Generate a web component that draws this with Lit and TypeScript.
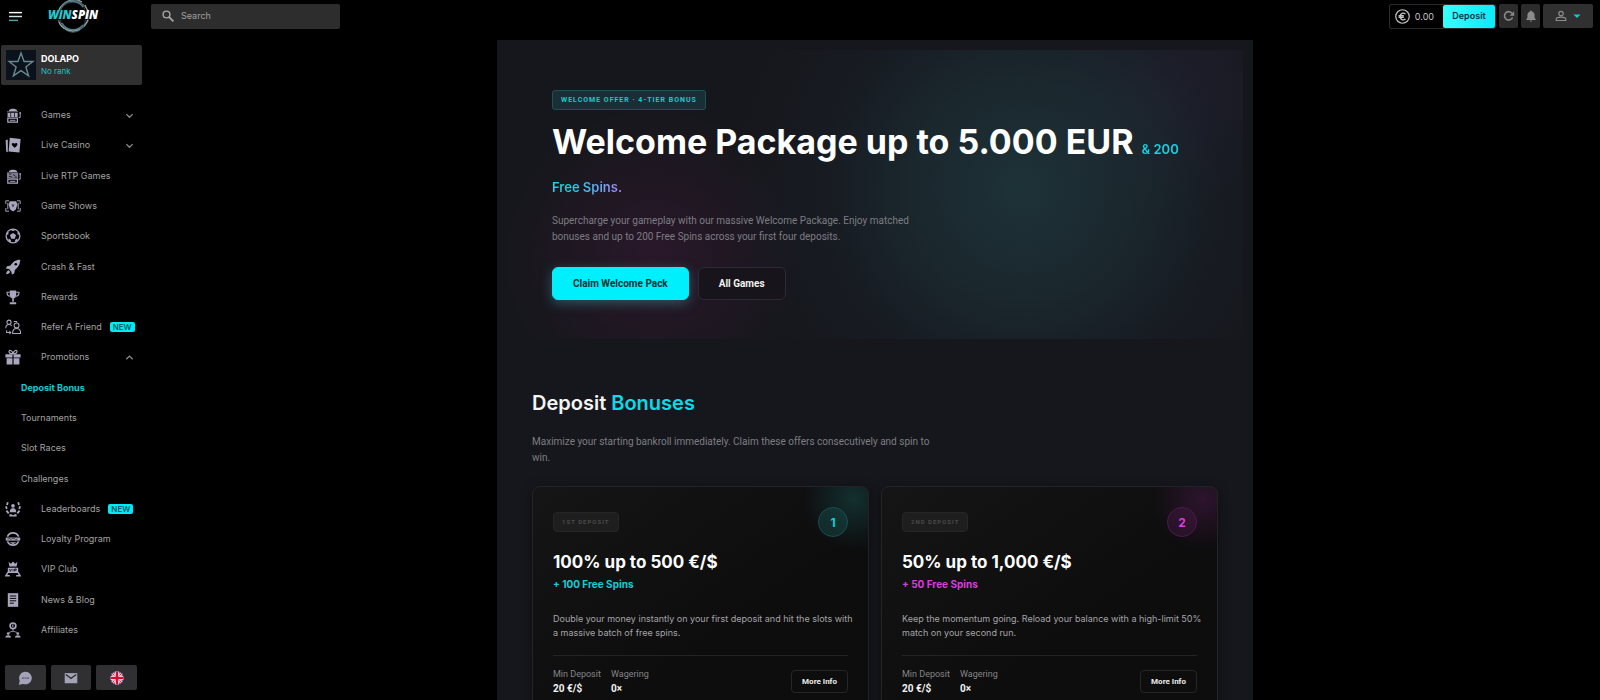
import { LitElement, html, svg, css, nothing, TemplateResult } from "lit";
import { customElement, property } from "lit/decorators.js";
import { classMap } from "lit/directives/class-map.js";

const shapes: Record<string, TemplateResult> = {
  slots: svg`<path d="M5 4C6 1.500 14 1.500 15 4v1H5z" fill="currentColor"/><path d="M2.500 5.500h14v1.200h-14zM3.200 7.500h3.600v5H3.200zM7.700 7.500h3.600v5H7.700zM12.200 7.500h3.600v5h-3.600z" fill="currentColor"/><path d="M3.500 14h12v5h-12z" fill="none" stroke="currentColor" stroke-width="1.500"/><path d="M6 16h7v1.200H6z" fill="currentColor"/><path d="M17 13h2V8" fill="none" stroke="currentColor" stroke-width="1.200"/><circle cx="19" cy="7.500" r="1.200" fill="currentColor"/>`,
  cards: svg`<path d="M3.500 3 .8 4.200 1.500 18l2 1z" fill="currentColor"/><path d="M6 1 19.500 2.500 18 19.500 4.500 18z" fill="currentColor"/><path d="M12 13.500C9.500 11.500 8 10 8.500 8.500 9 7 11 7 12 8.500 13.300 7 15.300 7.500 15.500 9c.1 1.500-1.500 3-3.500 4.500z" fill="#000"/>`,
  rtp: svg`<path d="M5 4C6 1.500 14 1.500 15 4v1H5z" fill="currentColor"/><path d="M2.500 5.500h14v7.500h-14z" fill="currentColor" opacity=".75"/><path d="M5 7.500h3M10 8l3 2M5 10.500l4 .8M12 11.500h3" stroke="#000" stroke-width=".9"/><path d="M3.500 14h12v5h-12z" fill="none" stroke="currentColor" stroke-width="1.500"/><path d="M6 16h7v1.200H6z" fill="currentColor"/><path d="M17 14h2V8" fill="none" stroke="currentColor" stroke-width="1.200"/><circle cx="19" cy="7.500" r="1.200" fill="currentColor"/>`,
  shows: svg`<path d="M5 3.500H1v4M1 12.500v4h4M15 3.500h4v4M19 12.500v4h-4M3.500 6v8M16.500 6v8" fill="none" stroke="currentColor" stroke-width="1.200"/><path d="M6 4h8l1.500 4-2 6.500L10 17l-3.500-2.500L4.500 8z" fill="currentColor"/><path d="m8 8 2 4 2-4z" fill="#000" opacity=".65"/>`,
  ball: svg`<circle cx="10" cy="10" r="8.600" fill="none" stroke="currentColor" stroke-width="1.600"/><path d="m10 6.200 3.800 2.700-1.500 4.400H7.700L6.200 8.900zM6.500 1.800h7L10 4zM1.500 8l2.500.5.500-3.500L3 5zM18.500 8l-2.500.5-.5-3.500L17 5zM4 16l.7-3 2.800 2-.5 3zM16 16l-.7-3-2.800 2 .5 3z" fill="currentColor"/>`,
  rocket: svg`<path d="M19 1C13 1 9.500 4 7 8L2.500 9 1 12l4 .5L8 16l.5 3.500 3-1.500 1-4.500C16 11 19 7 19 1z" fill="currentColor"/><circle cx="13.500" cy="6.500" r="1.600" fill="#000"/><path d="M4.500 14c-2 .5-3 2.500-3 5 2.500 0 4.500-1 5-3z" fill="currentColor"/>`,
  cup: svg`<path d="M6 2h8v5c0 3-1.500 5-4 5S6 10 6 7zM9 11h2v5H9zM6 16.500h8V19H6z" fill="currentColor"/><path d="M6 4H2.500c0 3 1.500 5 4 5M14 4h3.500c0 3-1.500 5-4 5" fill="none" stroke="currentColor" stroke-width="1.400"/>`,
  refer: svg`<g fill="none" stroke="currentColor" stroke-width="1.300"><circle cx="5" cy="4" r="2.600"/><path d="M1 11.500c0-3 1.500-4.500 4-4.500 1.500 0 3 .6 3.500 2"/><circle cx="14.500" cy="8" r="3"/><path d="M9.500 18c0-4 1.500-6 5-6s5 2 5 6z"/><path d="M2 14v3h5M5.500 15.200 7.200 17l-1.700 1.800M11 3h3.500v1.500"/></g>`,
  gift: svg`<path d="M.5 6.500h8.800v4H.5zM10.700 6.500h8.800v4h-8.800zM2 11.500h7.300v8H2zM10.700 11.500H18v8h-7.300z" fill="currentColor"/><path d="M10 6C7 6 5 5 5 3.200 5 .8 9 1 10 6zM10 6c3 0 5-1 5-2.800C15 .8 11 1 10 6z" fill="none" stroke="currentColor" stroke-width="1.500"/>`,
  leaders: svg`<circle cx="10" cy="6" r="2.300" fill="currentColor"/><path d="M6 14c0-3.500 1.200-5 4-5s4 1.500 4 5z" fill="currentColor"/><path d="M3.500 1.500 2.500 5M1.200 6.500 2.200 10M1.800 12l2.800 3.500M16.500 1.500l1 3.500M18.800 6.500l-1 3.500M18.200 12l-2.800 3.500" stroke="currentColor" stroke-width="2.200"/><path d="M5.500 16.500h3v3h-3zM11.500 16.500h3v3h-3zM8.500 17.500h3v2h-3z" fill="currentColor"/>`,
  loyalty: svg`<path d="M3 7C6 .8 14 .8 17 7M3 13c3 6.200 11 6.200 14 0" fill="none" stroke="currentColor" stroke-width="2"/><path d="M1 8.200h18v3.800H1z" fill="currentColor"/><path d="M3 10h2l1-1 1.500 2L9 9.500h3l1.500 1.500L16 9.800" stroke="#000" fill="none" stroke-width=".7"/><path d="M6 14h8l-4 2.500z" fill="currentColor"/>`,
  vip: svg`<path d="m4.500 1 2.800 2.500L10 .5l2.700 3L15.500 1l-1 6h-9zM3.500 8.500h13V15h-13z" fill="currentColor"/><path d="m5.500 10 1.300 3 1.300-3M10 10v3M12 13v-3h2v1.500h-2" stroke="#000" stroke-width=".9" fill="none"/><path d="M4 14 1 18.500h5M16 14l3 4.500h-5" stroke="currentColor" fill="none" stroke-width="1.800"/>`,
  news: svg`<path d="M3.500 1.500h13v17h-13z" fill="currentColor"/><path d="M6 5h8M6 8h8M6 11h8M6 14h5" stroke="#000" stroke-width="1.200"/>`,
  affiliates: svg`<circle cx="10" cy="4.800" r="3.600" fill="none" stroke="currentColor" stroke-width="2"/><path d="M11 3.500H9.500v2.600H11" fill="none" stroke="currentColor"/><path d="M10 9v3M5 13l5-1.500 5 1.500" stroke="currentColor" fill="none"/><circle cx="4" cy="14.500" r="1.700" fill="currentColor"/><circle cx="16" cy="14.500" r="1.700" fill="currentColor"/><path d="M.5 19.500c0-2 1.300-3 3.500-3s3.500 1 3.500 3zM12.500 19.500c0-2 1.300-3 3.500-3s3.500 1 3.500 3z" fill="currentColor"/>`,
  down: svg`<path d="m3 7 7 7 7-7" fill="none" stroke="currentColor" stroke-width="2.800"/>`,
  up: svg`<path d="m3 14 7-7 7 7" fill="none" stroke="currentColor" stroke-width="2.800"/>`,
  search: svg`<circle cx="7.500" cy="7.500" r="5.700" fill="none" stroke="currentColor" stroke-width="2.300"/><path d="m11.500 11.500 7.500 7.500" stroke="currentColor" stroke-width="2.800"/>`,
  star: svg`<path d="m10 1.500 2.200 6h6.300l-5 3.900 1.900 6.300-5.400-3.700-5.400 3.700 1.900-6.300-5-3.900h6.300z" fill="none" stroke="#68898f" stroke-width="1"/>`,
  euro: svg`<circle cx="10" cy="10" r="9" fill="none" stroke="currentColor" stroke-width="1.600"/><path d="M14 6.700C10.500 4 7 6.200 7 10s3.500 6 7 3.300M4.800 9h7M4.800 11.200h7" fill="none" stroke="currentColor" stroke-width="1.700"/>`,
  refresh: svg`<path d="M16 12.500A7 7 0 1 1 15.500 6" fill="none" stroke="currentColor" stroke-width="2.600"/><path d="M18.500 2v7.500H11z" fill="currentColor"/>`,
  bell: svg`<path d="M10 1c1 0 1.500.6 1.500 1.600C14.500 3.500 16 5.800 16 9v4.500l2 2v1H2v-1l2-2V9c0-3.200 1.500-5.500 4.500-6.400C8.500 1.600 9 1 10 1zM8 17.500h4c0 1.200-.8 2-2 2s-2-.8-2-2z" fill="currentColor"/>`,
  person: svg`<circle cx="10" cy="6" r="3.700" fill="none" stroke="currentColor" stroke-width="2"/><path d="M2 17.500v-2c0-2.200 3-3.500 8-3.500s8 1.300 8 3.500v2z" fill="none" stroke="currentColor" stroke-width="2"/>`,
  caret: svg`<path d="M1 6h18l-9 9z" fill="currentColor"/>`,
  chat: svg`<path d="M10.500 1a9 9 0 1 1-3 17.400L1 19.500l1.500-5.500A9 9 0 0 1 10.500 1z" fill="currentColor"/><path d="M5.500 9h2.800v2.300H5.500zM9.300 9h2.800v2.300H9.300zM13 9h2.800v2.300H13z" fill="#6a6a7e"/>`,
  mail: svg`<path d="M1 3h18v14.500H1z" fill="currentColor"/><path d="m2.500 5 7.500 5.500L17.500 5" fill="none" stroke="#303032" stroke-width="1.900"/>`,
  flag: svg`<clipPath id="disc"><circle cx="10" cy="10" r="9.500"/></clipPath><g clip-path="url(#disc)"><path d="M0 0h20v20H0z" fill="#2a3580"/><path d="m0 0 20 20M20 0 0 20" stroke="#fff" stroke-width="4"/><path d="m0 0 20 20M20 0 0 20" stroke="#d21034" stroke-width="1.600"/><path d="M10 0v20M0 10h20" stroke="#fff" stroke-width="6.500"/><path d="M10 0v20M0 10h20" stroke="#d21034" stroke-width="3.800"/></g>`,
  menu: svg`<path d="M0 4h20" stroke="#fff" stroke-width="2.200"/><path d="M0 10h20" stroke="#cfe3e6" stroke-width="2.200"/><path d="M0 16h14" stroke="#53a3ac" stroke-width="2.200"/>`,
};

@customElement("ws-icon")
export class WsIcon extends LitElement {
  @property() name = "";
  static styles = css`
    :host { display: block; width: 16px; height: 16px; flex: none; }
    svg { display: block; width: 100%; height: 100%; }
  `;
  render() {
    return html`<svg viewBox="0 0 20 20" aria-hidden="true">${shapes[this.name]}</svg>`;
  }
}

interface NavEntry {
  label: string;
  icon?: string;
  chevron?: "up" | "down";
  isNew?: boolean;
  active?: boolean;
}

const navEntries: NavEntry[] = [
  { label: "Games", icon: "slots", chevron: "down" },
  { label: "Live Casino", icon: "cards", chevron: "down" },
  { label: "Live RTP Games", icon: "rtp" },
  { label: "Game Shows", icon: "shows" },
  { label: "Sportsbook", icon: "ball" },
  { label: "Crash & Fast", icon: "rocket" },
  { label: "Rewards", icon: "cup" },
  { label: "Refer A Friend", icon: "refer", isNew: true },
  { label: "Promotions", icon: "gift", chevron: "up" },
  { label: "Deposit Bonus", active: true },
  { label: "Tournaments" },
  { label: "Slot Races" },
  { label: "Challenges" },
  { label: "Leaderboards", icon: "leaders", isNew: true },
  { label: "Loyalty Program", icon: "loyalty" },
  { label: "VIP Club", icon: "vip" },
  { label: "News & Blog", icon: "news" },
  { label: "Affiliates", icon: "affiliates" },
];

@customElement("ws-sidebar")
export class WsSidebar extends LitElement {
  static styles = css`
    :host { display: flex; flex-direction: column; min-height: 0; padding: 5px 8px 10px 1px; }
    .user { display: flex; align-items: center; gap: 5px; height: 40px; padding: 0 5px; background: #303030; border-radius: 2px; color: #fff; text-decoration: none; }
    .avatar { display: flex; align-items: center; justify-content: center; width: 30px; height: 30px; background: #0c121b; }
    .avatar ws-icon { width: 28px; height: 28px; }
    .who { display: flex; flex-direction: column; font-size: 9px; line-height: 12px; }
    .who strong { font-weight: 700; }
    .rank { color: #1cc3cc; font-size: 8px; }
    nav { display: flex; flex: 1; flex-direction: column; min-height: 0; margin: 15px 0 20px; }
    .item { display: flex; flex: 1; align-items: center; width: 100%; padding: 0 8px 0 4px; box-sizing: border-box; border: 0; background: none; color: #a3a3a3; font: 400 9px/14px Inter, sans-serif; text-align: left; text-decoration: none; white-space: nowrap; cursor: pointer; }
    .item ws-icon { color: #a9a7bd; }
    .item .label { margin-left: 20px; }
    .item.sub { padding-left: 20px; }
    .item.sub .label { margin-left: 0; }
    .item.active { color: #0ccfd6; font-weight: 700; }
    .item .chevron { width: 9px; height: 9px; margin-left: auto; color: #8d8d8d; }
    .new { margin-left: 8px; padding: 0 3px; border-radius: 2px; background: #00eaf6; color: #04464c; font-size: 8px; line-height: 10px; font-weight: 500; }
    .tools { display: grid; grid-template-columns: repeat(3, 1fr); gap: 5px; padding: 0 5px 0 4px; }
    .tools button { display: flex; align-items: center; justify-content: center; height: 25px; padding: 0; border: 0; border-radius: 2px; background: #303032; color: #a3a2b6; cursor: pointer; }
    .tools ws-icon { width: 14px; height: 14px; }
  `;

  private entry(e: NavEntry) {
    const cls = classMap({ item: true, sub: !e.icon, active: !!e.active });
    const body = html`
      ${e.icon ? html`<ws-icon name=${e.icon}></ws-icon>` : nothing}
      <span class="label">${e.label}</span>
      ${e.isNew ? html`<span class="new">NEW</span>` : nothing}
      ${e.chevron ? html`<ws-icon class="chevron" name=${e.chevron}></ws-icon>` : nothing}`;
    return e.chevron
      ? html`<button class=${cls} aria-expanded=${e.chevron === "up"}>${body}</button>`
      : html`<a class=${cls} href="#">${body}</a>`;
  }

  render() {
    return html`
      <a class="user" href="#">
        <span class="avatar"><ws-icon name="star"></ws-icon></span>
        <span class="who"><strong>DOLAPO</strong><span class="rank">No rank</span></span>
      </a>
      <nav>${navEntries.map((e) => this.entry(e))}</nav>
      <div class="tools">
        <button aria-label="Chat"><ws-icon name="chat"></ws-icon></button>
        <button aria-label="Mail"><ws-icon name="mail"></ws-icon></button>
        <button aria-label="Language"><ws-icon name="flag"></ws-icon></button>
      </div>`;
  }
}

@customElement("ws-header")
export class WsHeader extends LitElement {
  static styles = css`
    :host { display: flex; align-items: center; height: 32px; padding-right: 7px; }
    button { display: flex; align-items: center; justify-content: center; height: 24px; padding: 0; border: 0; border-radius: 2px; background: #2c2c2c; color: #8b8b8b; font: 400 9px/12px Inter, sans-serif; cursor: pointer; }
    .brand { display: flex; flex: none; align-items: center; width: 151px; }
    .menu { width: 13px; margin: 0 25px 0 9px; background: none; }
    .menu ws-icon { width: 13px; height: 13px; }
    .logo svg { display: block; width: 52px; height: 36px; }
    .search { display: flex; align-items: center; gap: 7px; width: 189px; height: 25px; padding: 0 11px; box-sizing: border-box; border-radius: 2px; background: #2d2d2d; color: #a8a8a8; }
    .search ws-icon { width: 12px; height: 12px; }
    .search input { flex: 1; min-width: 0; padding: 0; border: 0; outline: 0; background: none; color: #fff; font: 400 9px/14px Inter, sans-serif; }
    .search input::placeholder { color: #a0a0a0; opacity: 1; }
    .right { display: flex; align-items: center; gap: 3px; margin-left: auto; }
    .wallet { display: flex; align-items: center; height: 23px; padding-left: 5px; border: 1px solid #2c2c2c; border-radius: 2px; color: #c4c4c4; font-size: 9px; }
    .wallet ws-icon { width: 15px; height: 15px; }
    .amount { margin: 0 9px 0 5px; }
    .wallet .deposit { width: 52px; height: 23px; background: linear-gradient(90deg, #38fdfd, #0ceaf8); color: #06363a; font-weight: 600; }
    .square { width: 19px; }
    .square ws-icon { width: 12px; height: 12px; }
    .account { gap: 6px; width: 50px; background: #303030; }
    .account ws-icon { width: 12px; height: 12px; }
    .account .caret { width: 8px; height: 8px; color: #19c3cc; }
  `;

  render() {
    return html`
      <div class="brand">
        <button class="menu" aria-label="Menu"><ws-icon name="menu"></ws-icon></button>
        <a class="logo" href="#" aria-label="WinSpin">
          <svg viewBox="0 0 52 36">
            <g fill="none" stroke="#71898f">
              <circle cx="26" cy="18" r="15.500" stroke-width=".7" />
              <path d="M12 12C16 3 27-1 35 4M38 7c4 6 5 15-1 21M33 31C24 36 14 30 12 24" stroke="#8fa9ae" stroke-width="1.200" />
              <path d="M15 25c4 8 15 9 21 2M14 9C20 1 31 2 36 9" stroke="#4c7d86" stroke-width="1.500" />
              <ellipse cx="26" cy="18" rx="13" ry="16.500" stroke-width=".5" />
              <ellipse cx="27" cy="18" rx="15.500" ry="14" stroke-width=".5" />
            </g>
            <path d="M1 12h49v10H1z" fill="#000" opacity=".7" />
            <text x="1" y="21" font-family="Open Sans, sans-serif" font-size="11.500" font-weight="800" font-style="italic"><tspan fill="#27c6d0">WiN</tspan><tspan fill="#fff">SPIN</tspan></text>
          </svg>
        </a>
      </div>
      <label class="search"><ws-icon name="search"></ws-icon><input type="search" placeholder="Search" aria-label="Search" /></label>
      <div class="right">
        <div class="wallet">
          <ws-icon name="euro"></ws-icon><span class="amount">0.00</span>
          <button class="deposit">Deposit</button>
        </div>
        <button class="square" aria-label="Refresh"><ws-icon name="refresh"></ws-icon></button>
        <button class="square" aria-label="Notifications"><ws-icon name="bell"></ws-icon></button>
        <button class="account" aria-label="Account"><ws-icon name="person"></ws-icon><ws-icon class="caret" name="caret"></ws-icon></button>
      </div>`;
  }
}

@customElement("ws-bonus-card")
export class WsBonusCard extends LitElement {
  @property({ type: Number }) tier = 1;
  @property() tag = "";
  @property() heading = "";
  @property() spins = "";
  @property() text = "";
  @property({ reflect: true }) tone = "cyan";

  static styles = css`
    :host { --tone: #0fd0d8; --wash: 24, 80, 80; display: block; padding: 20px; border: 1px solid #242428; border-radius: 8px; background: radial-gradient(circle at calc(100% - 14px) 12px, rgba(var(--wash), .5), rgba(var(--wash), 0) 50px), linear-gradient(145deg, #151515, #0d0d0e 60%); box-shadow: 0 3px 12px rgba(0, 0, 0, .4); }
    :host([tone="pink"]) { --tone: #d93ddd; --wash: 76, 26, 76; }
    .top { display: flex; align-items: center; justify-content: space-between; height: 30px; }
    .tag { padding: 0 8px; border: 1px solid #262626; border-radius: 4px; background: #1e1e1e; color: #494949; font-family: Roboto, sans-serif; font-size: 6px; line-height: 18px; font-weight: 700; letter-spacing: 1px; }
    .tier { display: flex; align-items: center; justify-content: center; width: 28px; height: 28px; border: 1px solid rgba(var(--wash), 1); border-radius: 50%; background: rgba(var(--wash), .4); color: var(--tone); font-size: 12px; font-weight: 700; }
    h3 { margin: 13px 0 0; color: #fff; font-size: 17px; line-height: 24px; font-weight: 700; }
    .spins { margin: 3px 0 0; color: var(--tone); font-size: 10px; line-height: 14px; font-weight: 700; }
    .text { margin: 21px -10px 0 0; color: #a4a4a6; font-size: 9px; line-height: 14px; }
    .foot { display: flex; align-items: center; gap: 10px; margin-top: 15px; padding-top: 11px; border-top: 1px solid #232325; }
    dl { display: flex; gap: 10px; margin: 0; }
    dt { color: #858587; font-family: Roboto, sans-serif; font-size: 9px; line-height: 14px; }
    dd { margin: 1px 0 0; color: #f2f2f2; font-family: Roboto, sans-serif; font-size: 10px; line-height: 14px; font-weight: 700; }
    button { height: 23px; margin-left: auto; padding: 0 10px; border: 1px solid #262628; border-radius: 4px; background: #0d0d0e; color: #ececec; font: 700 8px/12px Roboto, sans-serif; cursor: pointer; }
  `;

  render() {
    return html`
      <div class="top"><span class="tag">${this.tag}</span><span class="tier">${this.tier}</span></div>
      <h3>${this.heading}</h3>
      <p class="spins">${this.spins}</p>
      <p class="text">${this.text}</p>
      <div class="foot">
        <dl>
          <div><dt>Min Deposit</dt><dd>20 €/$</dd></div>
          <div><dt>Wagering</dt><dd>0×</dd></div>
        </dl>
        <button>More Info</button>
      </div>`;
  }
}

@customElement("app-root")
export class AppRoot extends LitElement {
  static styles = css`
    :host { display: grid; grid-template-columns: 150px minmax(0, 1fr); grid-template-rows: 40px minmax(0, 1fr); height: 100vh; overflow: hidden; background: #000; color: #fff; font-family: Inter, sans-serif; }
    ws-header { grid-column: 1 / -1; }
    main { min-height: 0; overflow-y: auto; scrollbar-width: none; }
    .panel { max-width: 736px; margin: 0 auto; padding: 10px; background: #16171c; }
    .hero { padding: 40px 45px 39px; background: radial-gradient(circle at 70% 48%, rgba(30, 52, 57, .95), rgba(27, 42, 48, .85) 110px, rgba(24, 29, 38, .6) 200px, rgba(23, 23, 28, 0) 290px), radial-gradient(circle at 88% 16%, rgba(46, 36, 62, .7), rgba(23, 23, 28, 0) 120px), radial-gradient(circle at 20% 72%, rgba(50, 24, 48, .7), rgba(23, 23, 28, 0) 150px), #16171c; }
    .badge { display: inline-block; padding: 0 8px; border: 1px solid #215158; border-radius: 3px; background: #1a2f35; color: #16c9d2; font-family: Roboto, sans-serif; font-size: 7px; line-height: 18px; font-weight: 700; letter-spacing: 1px; vertical-align: top; }
    h1 { margin: 13px 0 0; font-size: 34px; line-height: 38px; font-weight: 700; }
    .accent { font-size: 13px; line-height: 14px; font-weight: 600; color: transparent; background: linear-gradient(90deg, #16d4e6 50%, #a884f2); background-clip: text; -webkit-background-clip: text; }
    .lead { max-width: 408px; margin: 0; color: #7d7d82; font-family: Roboto, sans-serif; font-size: 10px; line-height: 16px; }
    .hero .lead { max-width: 370px; margin-top: 14px; }
    .actions { display: flex; gap: 9px; margin-top: 22px; }
    .actions button { height: 33px; padding: 0 20px; border: 1px solid #2d2a33; border-radius: 6px; background: #17151b; color: #f1f1f1; font: 700 10px/14px Roboto, sans-serif; cursor: pointer; }
    .actions .primary { border-color: #00effc; background: #00effc; color: #073135; box-shadow: 0 3px 12px rgba(60, 150, 165, .5); }
    .bonuses { padding: 50px 25px 30px; }
    h2 { margin: 0 0 17px; font-size: 20px; line-height: 28px; font-weight: 600; color: #f4f4f4; }
    h2 span { color: #0cdbe6; }
    .cards { display: grid; grid-template-columns: repeat(auto-fit, minmax(260px, 1fr)); gap: 12px; margin-top: 20px; }
  `;

  render() {
    return html`
      <ws-header></ws-header>
      <ws-sidebar></ws-sidebar>
      <main>
        <div class="panel">
          <section class="hero">
            <span class="badge">WELCOME OFFER · 4-TIER BONUS</span>
            <h1>Welcome Package up to 5.000 EUR <span class="accent">&amp; 200 Free Spins.</span></h1>
            <p class="lead">Supercharge your gameplay with our massive Welcome Package. Enjoy matched bonuses and up to 200 Free Spins across your first four deposits.</p>
            <div class="actions"><button class="primary">Claim Welcome Pack</button><button>All Games</button></div>
          </section>
          <section class="bonuses">
            <h2>Deposit <span>Bonuses</span></h2>
            <p class="lead">Maximize your starting bankroll immediately. Claim these offers consecutively and spin to win.</p>
            <div class="cards">
              <ws-bonus-card tier="1" tag="1ST DEPOSIT" heading="100% up to 500 €/$" spins="+ 100 Free Spins" text="Double your money instantly on your first deposit and hit the slots with a massive batch of free spins."></ws-bonus-card>
              <ws-bonus-card tone="pink" tier="2" tag="2ND DEPOSIT" heading="50% up to 1,000 €/$" spins="+ 50 Free Spins" text="Keep the momentum going. Reload your balance with a high-limit 50% match on your second run."></ws-bonus-card>
            </div>
          </section>
        </div>
      </main>`;
  }
}
